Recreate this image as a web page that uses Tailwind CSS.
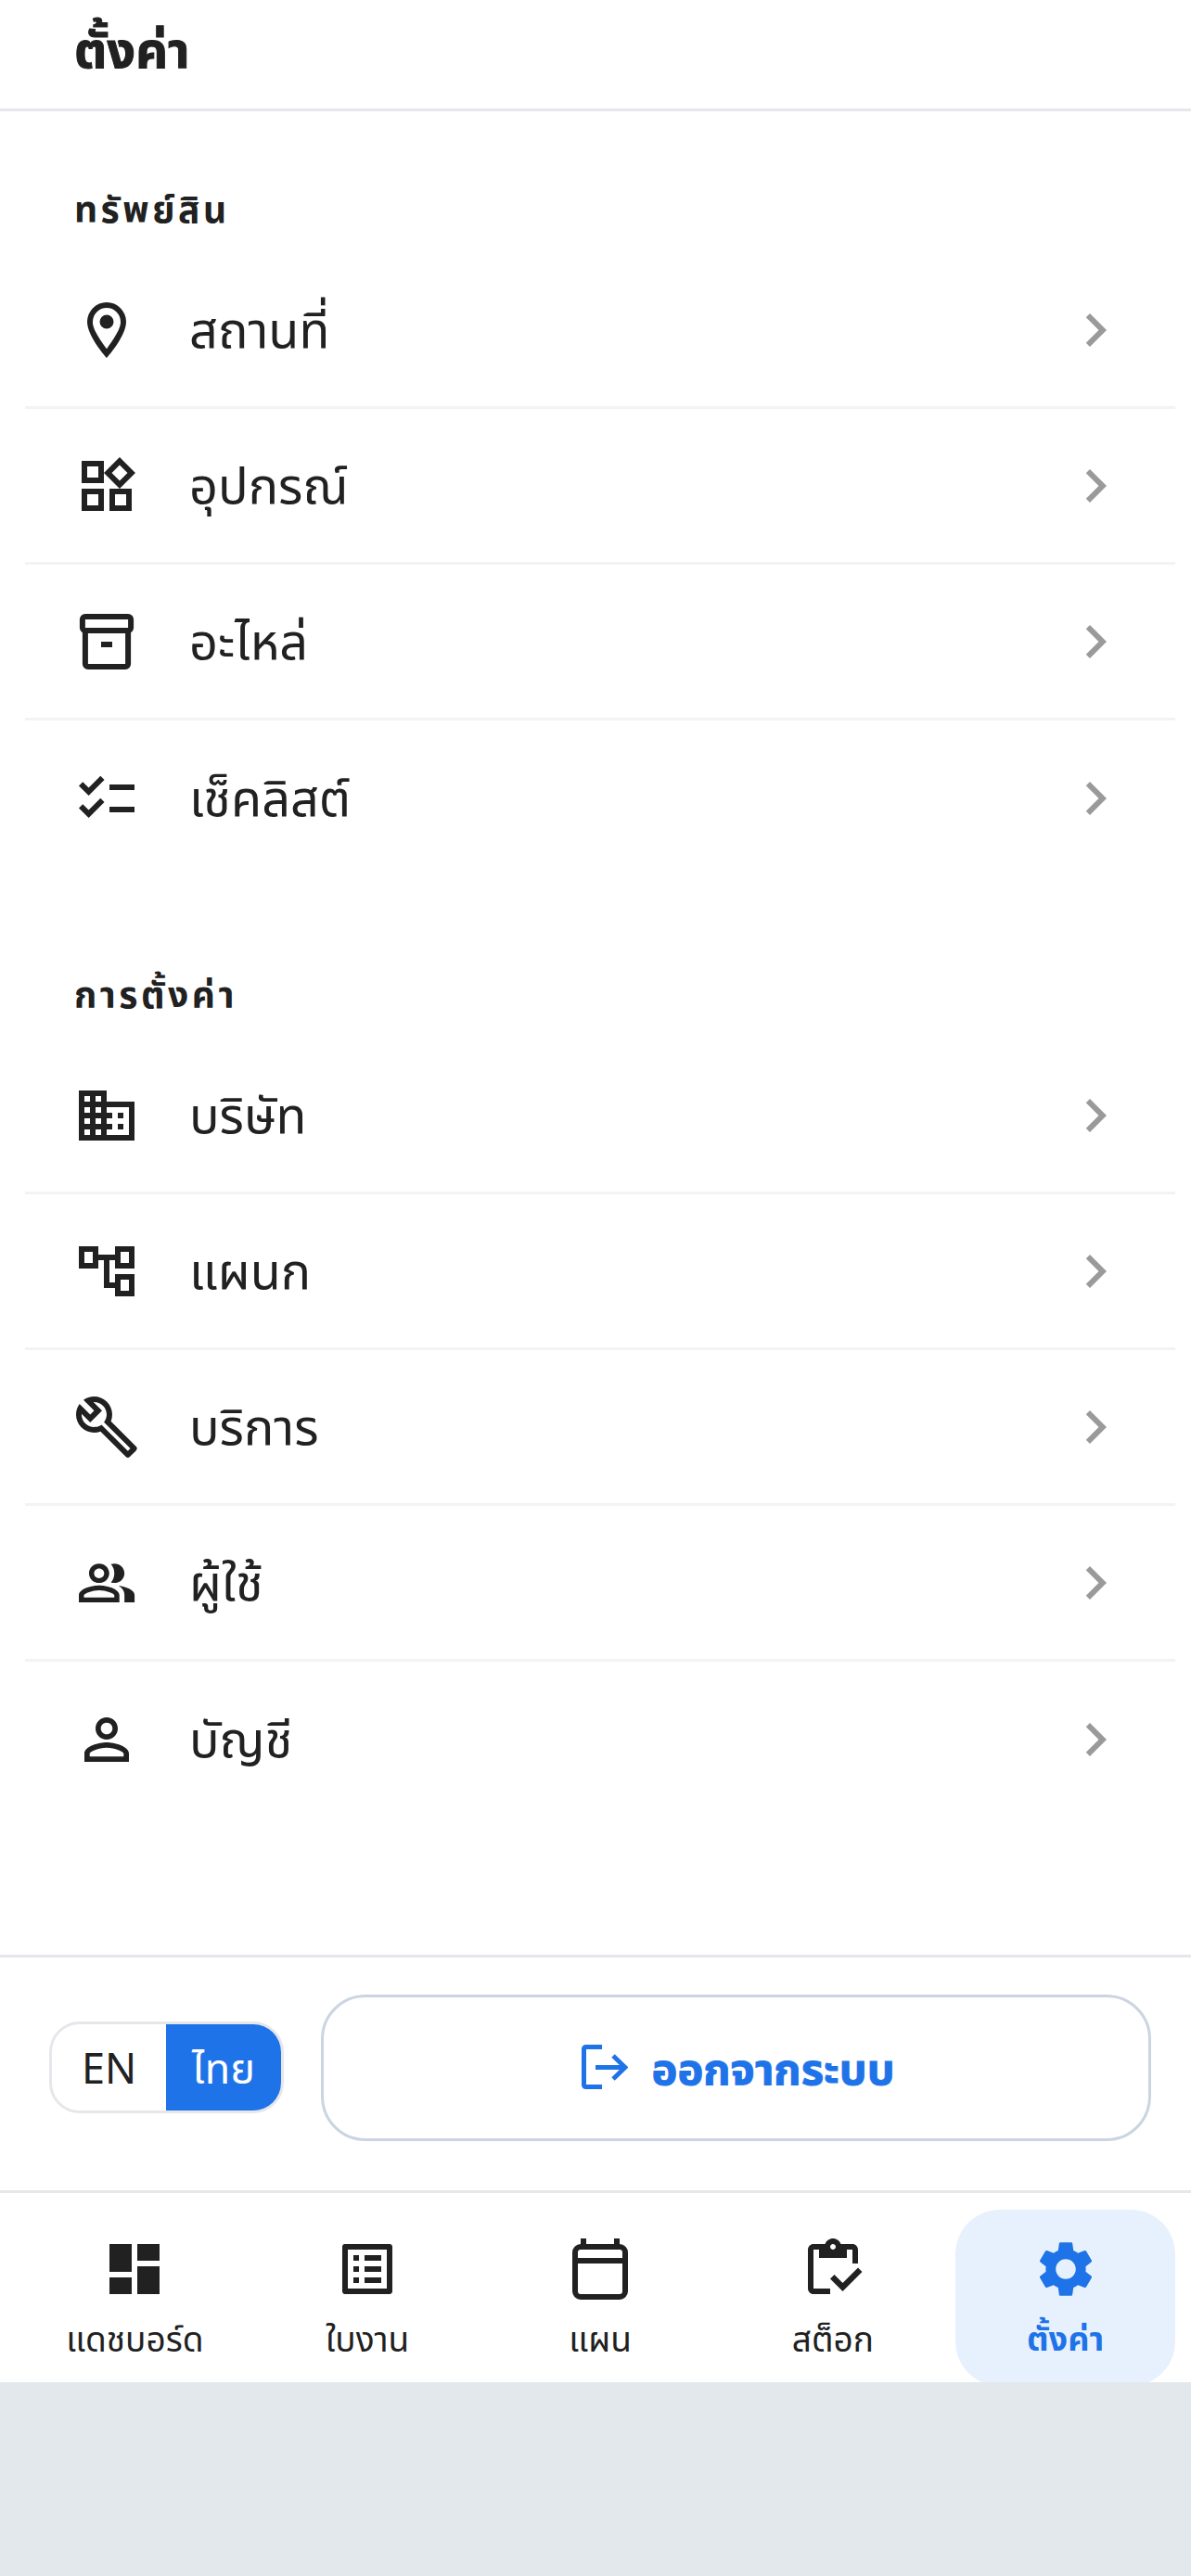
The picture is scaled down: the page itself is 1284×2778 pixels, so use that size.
<!DOCTYPE html>
<html lang="th">
  <head>
    <meta charset="UTF-8" />
    <title>ตั้งค่า</title>
    <script src="https://cdn.jsdelivr.net/npm/@tailwindcss/browser@4"></script>
  </head>
  <body class="bg-[#e2e8ec] font-['Noto_Sans','Noto_Sans_Thai',sans-serif] text-[#212121]">
    <div class="h-[2569px] bg-white flex flex-col overflow-hidden">
      <!-- header -->
      <header class="h-[120px] shrink-0 border-b-[3px] border-[#e5e7eb] pl-[80px] pb-[14px] flex items-center">
        <h1 class="text-[54px] font-bold leading-none [-webkit-text-stroke:1px_currentColor]">ตั้งค่า</h1>
      </header>

      <!-- assets -->
      <section class="pl-[27px] pr-[17px] pt-[80px]">
        <h2 class="h-[73px] pl-[53px] text-[39px] font-bold tracking-[3.5px] leading-[50px]">ทรัพย์สิน</h2>
        <a class="h-[168px] pl-[52px] pr-[50px] flex items-center border-b-[3px] border-[#f1f3f5]">
          <svg class="w-[72px] h-[72px] fill-[#212121]" viewBox="0 0 24 24"><path d="M12,6.5A2.5,2.5 0 0,1 14.5,9A2.5,2.5 0 0,1 12,11.5A2.5,2.5 0 0,1 9.5,9A2.5,2.5 0 0,1 12,6.5M12,2A7,7 0 0,1 19,9C19,14.25 12,22 12,22C12,22 5,14.25 5,9A7,7 0 0,1 12,2M12,4A5,5 0 0,0 7,9C7,10 7,12 12,18.71C17,12 17,10 17,9A5,5 0 0,0 12,4Z"/></svg>
          <span class="ml-[53px] pb-[3px] flex-1 text-[54px]">สถานที่</span>
          <svg class="w-[72px] h-[72px] fill-[#9a9a9a]" viewBox="0 0 24 24"><path d="M10 6 8.59 7.41 13.17 12l-4.58 4.59L10 18l6-6z"/></svg>
        </a>
        <a class="h-[168px] pl-[52px] pr-[50px] flex items-center border-b-[3px] border-[#f1f3f5]">
          <svg class="w-[72px] h-[72px] fill-[#212121]" viewBox="0 0 24 24"><path d="M16.66 4.52l2.83 2.83-2.83 2.83-2.83-2.83 2.83-2.83M9 5v4H5V5h4m10 10v4h-4v-4h4M9 15v4H5v-4h4m7.66-13.31L11 7.34 16.66 13l5.66-5.66-5.66-5.65zM11 3H3v8h8V3zm10 10h-8v8h8v-8zm-10 0H3v8h8v-8z"/></svg>
          <span class="ml-[53px] pb-[3px] flex-1 text-[54px]">อุปกรณ์</span>
          <svg class="w-[72px] h-[72px] fill-[#9a9a9a]" viewBox="0 0 24 24"><path d="M10 6 8.59 7.41 13.17 12l-4.58 4.59L10 18l6-6z"/></svg>
        </a>
        <a class="h-[168px] pl-[52px] pr-[50px] flex items-center border-b-[3px] border-[#f1f3f5]">
          <svg class="w-[72px] h-[72px] fill-none stroke-[#212121] stroke-2" viewBox="0 0 24 24"><rect x="3.3" y="3" width="17.4" height="5" rx="1"/><path d="M4.3 8v12a1 1 0 0 0 1 1h13.4a1 1 0 0 0 1-1V8M10 13h4"/></svg>
          <span class="ml-[53px] pb-[3px] flex-1 text-[54px]">อะไหล่</span>
          <svg class="w-[72px] h-[72px] fill-[#9a9a9a]" viewBox="0 0 24 24"><path d="M10 6 8.59 7.41 13.17 12l-4.58 4.59L10 18l6-6z"/></svg>
        </a>
        <a class="h-[168px] pl-[52px] pr-[50px] flex items-center">
          <svg class="w-[72px] h-[72px] fill-[#212121]" viewBox="0 0 24 24"><path d="M22 7h-9v2h9V7zm0 8h-9v2h9v-2zM5.54 11 2 7.46l1.41-1.41 2.12 2.12 4.24-4.24 1.41 1.41L5.54 11zm0 8L2 15.46l1.41-1.41 2.12 2.12 4.24-4.24 1.41 1.41L5.54 19z"/></svg>
          <span class="ml-[53px] pb-[3px] flex-1 text-[54px]">เช็คลิสต์</span>
          <svg class="w-[72px] h-[72px] fill-[#9a9a9a]" viewBox="0 0 24 24"><path d="M10 6 8.59 7.41 13.17 12l-4.58 4.59L10 18l6-6z"/></svg>
        </a>
      </section>

      <!-- settings -->
      <section class="pl-[27px] pr-[17px] pt-[102px]">
        <h2 class="h-[73px] pl-[53px] text-[39px] font-bold tracking-[3.5px] leading-[50px]">การตั้งค่า</h2>
        <a class="h-[168px] pl-[52px] pr-[50px] flex items-center border-b-[3px] border-[#f1f3f5]">
          <svg class="w-[72px] h-[72px] fill-[#212121]" viewBox="0 0 24 24"><path d="M12 7V3H2v18h20V7H12zM6 19H4v-2h2v2zm0-4H4v-2h2v2zm0-4H4V9h2v2zm0-4H4V5h2v2zm4 12H8v-2h2v2zm0-4H8v-2h2v2zm0-4H8V9h2v2zm0-4H8V5h2v2zm10 12h-8v-2h2v-2h-2v-2h2v-2h-2V9h8v10zm-2-8h-2v2h2v-2zm0 4h-2v2h2v-2z"/></svg>
          <span class="ml-[53px] pb-[3px] flex-1 text-[54px]">บริษัท</span>
          <svg class="w-[72px] h-[72px] fill-[#9a9a9a]" viewBox="0 0 24 24"><path d="M10 6 8.59 7.41 13.17 12l-4.58 4.59L10 18l6-6z"/></svg>
        </a>
        <a class="h-[168px] pl-[52px] pr-[50px] flex items-center border-b-[3px] border-[#f1f3f5]">
          <svg class="w-[72px] h-[72px] fill-[#212121]" viewBox="0 0 24 24"><path d="M22 11V3h-7v3H9V3H2v8h7V8h2v10h4v3h7v-8h-7v3h-2V8h2v3h7zM7 9H4V5h3v4zm10 6h3v4h-3v-4zm0-10h3v4h-3V5z"/></svg>
          <span class="ml-[53px] pb-[3px] flex-1 text-[54px]">แผนก</span>
          <svg class="w-[72px] h-[72px] fill-[#9a9a9a]" viewBox="0 0 24 24"><path d="M10 6 8.59 7.41 13.17 12l-4.58 4.59L10 18l6-6z"/></svg>
        </a>
        <a class="h-[168px] pl-[52px] pr-[50px] flex items-center border-b-[3px] border-[#f1f3f5]">
          <svg class="w-[72px] h-[72px] fill-[#212121]" viewBox="0 0 24 24"><path d="M22.61,19L13.53,9.91C14.46,7.57 14,4.81 12.09,2.91C9.79,0.61 6.21,0.4 3.66,2.26L7.5,6.11L6.08,7.5L2.25,3.69C0.39,6.23 0.6,9.82 2.9,12.11C4.76,13.97 7.47,14.46 9.79,13.59L18.9,22.7C19.29,23.09 19.92,23.09 20.31,22.7L22.61,20.4C23,20 23,19.39 22.61,19M19.61,20.59L10.15,11.13C9.54,11.58 8.86,11.85 8.15,11.95C6.79,12.15 5.36,11.74 4.32,10.7C3.37,9.76 2.93,8.5 3,7.26L6.09,10.35L10.33,6.11L7.24,3C8.5,2.95 9.73,3.39 10.68,4.33C11.76,5.41 12.17,6.9 11.92,8.29C11.8,9 11.5,9.66 11.04,10.25L20.5,19.7L19.61,20.59Z"/></svg>
          <span class="ml-[53px] pb-[3px] flex-1 text-[54px]">บริการ</span>
          <svg class="w-[72px] h-[72px] fill-[#9a9a9a]" viewBox="0 0 24 24"><path d="M10 6 8.59 7.41 13.17 12l-4.58 4.59L10 18l6-6z"/></svg>
        </a>
        <a class="h-[168px] pl-[52px] pr-[50px] flex items-center border-b-[3px] border-[#f1f3f5]">
          <svg class="w-[72px] h-[72px] fill-[#212121]" viewBox="0 0 24 24"><path transform="translate(1.1 1.6) scale(0.91 0.87)" d="M16.67 13.13C18.04 14.06 19 15.32 19 17v3h4v-3c0-2.18-3.57-3.47-6.33-3.87z M15 12c2.21 0 4-1.79 4-4s-1.79-4-4-4c-.47 0-.91.1-1.33.24C14.5 5.27 15 6.58 15 8s-.5 2.73-1.33 3.76c.42.14.86.24 1.33.24z M9 12c2.21 0 4-1.79 4-4s-1.79-4-4-4-4 1.79-4 4 1.79 4 4 4zm0-6c1.1 0 2 .9 2 2s-.9 2-2 2-2-.9-2-2 .9-2 2-2z M9 13c-2.67 0-8 1.34-8 4v3h16v-3c0-2.66-5.33-4-8-4zm6 5H3v-.99C3.2 16.29 6.3 15 9 15s5.8 1.29 6 2z"/></svg>
          <span class="ml-[53px] pb-[3px] flex-1 text-[54px]">ผู้ใช้</span>
          <svg class="w-[72px] h-[72px] fill-[#9a9a9a]" viewBox="0 0 24 24"><path d="M10 6 8.59 7.41 13.17 12l-4.58 4.59L10 18l6-6z"/></svg>
        </a>
        <a class="h-[168px] pl-[52px] pr-[50px] flex items-center">
          <svg class="w-[72px] h-[72px] fill-[#212121]" viewBox="0 0 24 24"><path d="M12 5.9c1.16 0 2.1.94 2.1 2.1s-.94 2.1-2.1 2.1S9.9 9.16 9.9 8s.94-2.1 2.1-2.1m0 9c2.97 0 6.1 1.46 6.1 2.1v1.1H5.9V17c0-.64 3.13-2.1 6.1-2.1M12 4C9.79 4 8 5.79 8 8s1.79 4 4 4 4-1.79 4-4-1.79-4-4-4zm0 9c-2.67 0-8 1.34-8 4v3h16v-3c0-2.66-5.33-4-8-4z"/></svg>
          <span class="ml-[53px] pb-[3px] flex-1 text-[54px]">บัญชี</span>
          <svg class="w-[72px] h-[72px] fill-[#9a9a9a]" viewBox="0 0 24 24"><path d="M10 6 8.59 7.41 13.17 12l-4.58 4.59L10 18l6-6z"/></svg>
        </a>
      </section>

      <!-- language + logout -->
      <div class="mt-auto h-[254px] shrink-0 border-t-[3px] border-[#e5e7eb] pt-[40px] pl-[53px] pr-[43px] flex items-start gap-[40px]">
        <div class="mt-[29px] w-[253px] h-[99px] shrink-0 flex rounded-[33px] border-[3px] border-[#e5e7eb] overflow-hidden text-[45px]">
          <button class="w-[123px] flex items-center justify-center">EN</button>
          <button class="flex-1 flex items-center justify-center bg-[#1f73e8] text-white">ไทย</button>
        </div>
        <button class="flex-1 h-[158px] rounded-[48px] border-[3px] border-[#cbd5e1] flex items-center justify-center gap-[26px] text-[#1f73e8] text-[47px] font-bold">
          <svg class="w-[54px] h-[54px] fill-none stroke-[#1f73e8] stroke-[5px]" viewBox="0 0 54 54"><path d="M26 4.5H8.5a2 2 0 0 0-2 2v39a2 2 0 0 0 2 2H26M19 26.5h32M38 14l13 12.5L38 39"/></svg>
          <span class="[-webkit-text-stroke:1px_currentColor]">ออกจากระบบ</span>
        </button>
      </div>

      <!-- bottom nav -->
      <nav class="shrink-0 h-[207px] border-t-[3px] border-[#e5e7eb] pt-[18px] pl-[27px] pr-[17px] grid grid-cols-5 gap-[14px] text-[37px] leading-[50px] text-center">
        <a class="h-[190px] pt-[28px] rounded-[48px] flex flex-col items-center">
          <svg class="w-[72px] h-[72px] fill-[#212121]" viewBox="0 0 24 24"><path d="M3 13h8V3H3v10zm0 8h8v-6H3v6zm10 0h8V11h-8v10zm0-18v6h8V3h-8z"/></svg>
          <span class="mt-[14px]">แดชบอร์ด</span>
        </a>
        <a class="h-[190px] pt-[28px] rounded-[48px] flex flex-col items-center">
          <svg class="w-[72px] h-[72px] fill-[#212121]" viewBox="0 0 24 24"><path d="M19 5v14H5V5h14m1.1-2H3.9c-.5 0-.9.4-.9.9v16.2c0 .4.4.9.9.9h16.2c.4 0 .9-.5.9-.9V3.9c0-.5-.5-.9-.9-.9zM11 7h6v2h-6V7zm0 4h6v2h-6v-2zm0 4h6v2h-6zM7 7h2v2H7zm0 4h2v2H7zm0 4h2v2H7z"/></svg>
          <span class="mt-[14px]">ใบงาน</span>
        </a>
        <a class="h-[190px] pt-[28px] rounded-[48px] flex flex-col items-center">
          <svg class="w-[72px] h-[72px] fill-none stroke-[#212121] stroke-2" viewBox="0 0 24 24"><rect x="3" y="4" width="18" height="18" rx="2"/><path d="M3 9h18M6 1v3M18 1v3"/></svg>
          <span class="mt-[14px]">แผน</span>
        </a>
        <a class="h-[190px] pt-[28px] rounded-[48px] flex flex-col items-center">
          <svg class="w-[72px] h-[72px] fill-[#212121]" viewBox="0 0 24 24"><path d="M5,5h2v3h10V5h2v5h2V5c0-1.1-0.9-2-2-2h-4.18C14.4,1.84,13.3,1,12,1S9.6,1.84,9.18,3H5C3.9,3,3,3.9,3,5v14c0,1.1,0.9,2,2,2h6v-2H5V5z M12,3c0.55,0,1,0.45,1,1s-0.45,1-1,1s-1-0.45-1-1S11.45,3,12,3z"/><path d="M21 11.5 15.5 17l-3-3-1.5 1.5 4.5 4.5 7-7z"/></svg>
          <span class="mt-[14px]">สต็อก</span>
        </a>
        <a class="h-[190px] pt-[28px] rounded-[48px] flex flex-col items-center bg-[#e7f0fd] text-[#1f73e8] font-bold">
          <svg class="w-[72px] h-[72px] fill-[#1f73e8]" viewBox="0 0 24 24"><path d="M19.14 12.94c.04-.3.06-.61.06-.94 0-.32-.02-.64-.07-.94l2.03-1.58c.18-.14.23-.41.12-.61l-1.92-3.32c-.12-.22-.37-.29-.59-.22l-2.39.96c-.5-.38-1.03-.7-1.62-.94l-.36-2.54c-.04-.24-.24-.41-.48-.41h-3.84c-.24 0-.43.17-.47.41l-.36 2.54c-.59.24-1.13.57-1.62.94l-2.39-.96c-.22-.08-.47 0-.59.22L2.74 8.87c-.12.21-.08.47.12.61l2.03 1.58c-.05.3-.09.63-.09.94s.02.64.07.94l-2.03 1.58c-.18.14-.23.41-.12.61l1.92 3.32c.12.22.37.29.59.22l2.39-.96c.5.38 1.03.7 1.62.94l.36 2.54c.05.24.24.41.48.41h3.84c.24 0 .44-.17.47-.41l.36-2.54c.59-.24 1.13-.56 1.62-.94l2.39.96c.22.08.47 0 .59-.22l1.92-3.32c.12-.22.07-.47-.12-.61l-2.01-1.58zM12 15.6c-1.98 0-3.6-1.62-3.6-3.6s1.62-3.6 3.6-3.6 3.6 1.62 3.6 3.6-1.62 3.6-3.6 3.6z"/></svg>
          <span class="mt-[14px] text-[36px]">ตั้งค่า</span>
        </a>
      </nav>
    </div>
  </body>
</html>
